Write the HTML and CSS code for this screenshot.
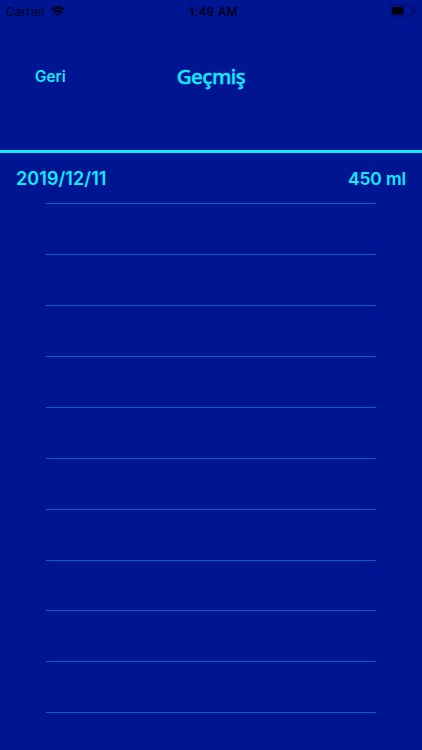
FILE: index.html
```html
<!DOCTYPE html>
<html lang="tr">
<head>
<meta charset="utf-8">
<title>Geçmiş</title>
<link rel="stylesheet" href="styles.css">
</head>
<body>
<div class="screen">
  <div class="status">
    <div class="carrier">
      <span>Carrier</span>
      <svg class="wifi" width="14" height="11" viewBox="0 0 14 11" fill="none" stroke="currentColor" stroke-width="2.3">
        <path d="M.8 4.2Q7-1.8 13.2 4.2"/>
        <path d="M3 6.9Q7 3.1 11 6.9"/>
        <path d="M7 10.6 4.9 8.5Q7 6.8 9.1 8.5Z" fill="currentColor" stroke="none"/>
      </svg>
    </div>
    <time class="clock">1:49 AM</time>
    <svg class="battery" width="27" height="12" viewBox="0 0 27 12">
      <rect x=".5" y=".5" width="22.5" height="10.5" rx="2.5" fill="none" stroke="#000b65"/>
      <rect x="2" y="2" width="11.5" height="7.5" rx="1" fill="#00020f"/>
      <path d="M24.3 4v4q1.5-.6 1.5-2t-1.5-2Z" fill="#000b65"/>
    </svg>
  </div>
  <header class="header">
    <span class="back">Geri</span>
    <h1 class="title">Geçmiş</h1>
  </header>
  <main class="list">
    <div class="row"><span class="date">2019/12/11</span><span class="amount">450 ml</span></div>
    <div class="row"></div>
    <div class="row"></div>
    <div class="row"></div>
    <div class="row"></div>
    <div class="row"></div>
    <div class="row"></div>
    <div class="row"></div>
    <div class="row"></div>
    <div class="row"></div>
    <div class="row"></div>
  </main>
</div>
</body>
</html>
```
FILE: styles.css
```css
* { box-sizing: border-box; }
body { margin: 0; background: #001592; }
.screen {
  height: 750px;
  overflow: hidden;
  color: #12eaff;
  font-family: Inter, "Liberation Sans", sans-serif;
}
.status {
  display: grid;
  grid-template-columns: 1fr auto 1fr;
  align-items: center;
  height: 22px;
  padding: 0 5px 0 6px;
  color: #00021c;
  font-size: 12px;
}
.carrier { display: flex; align-items: center; gap: 5px; letter-spacing: 0.05px; }
.clock { padding-left: 4px; font-weight: 600; letter-spacing: 0.2px; }
.battery { justify-self: end; }
.header {
  display: grid;
  grid-template-columns: 100px 222px 100px;
  align-items: center;
  height: 131px;
  padding-bottom: 19px;
  border-bottom: 3px solid #12eaff;
}
.back { padding-left: 35px; font-size: 15.3px; font-weight: 600; }
.title {
  margin: 0;
  padding-bottom: 2px;
  text-align: center;
  font: 500 20.5px "Noto Sans", sans-serif;
  letter-spacing: -0.5px;
  -webkit-text-stroke: 0.4px currentColor;
}
.list { display: flex; flex-direction: column; }
.row {
  display: flex;
  flex: none;
  justify-content: space-between;
  align-items: center;
  height: 50.95px;
  padding: 0 16px;
  font-size: 18px;
  font-weight: 600;
  background: linear-gradient(#0c60be, #0c60be) 46px 100% / 330px 1px no-repeat;
}
.date { letter-spacing: 0.06px; }
.amount { font-size: 17.5px; letter-spacing: -0.15px; }
```
